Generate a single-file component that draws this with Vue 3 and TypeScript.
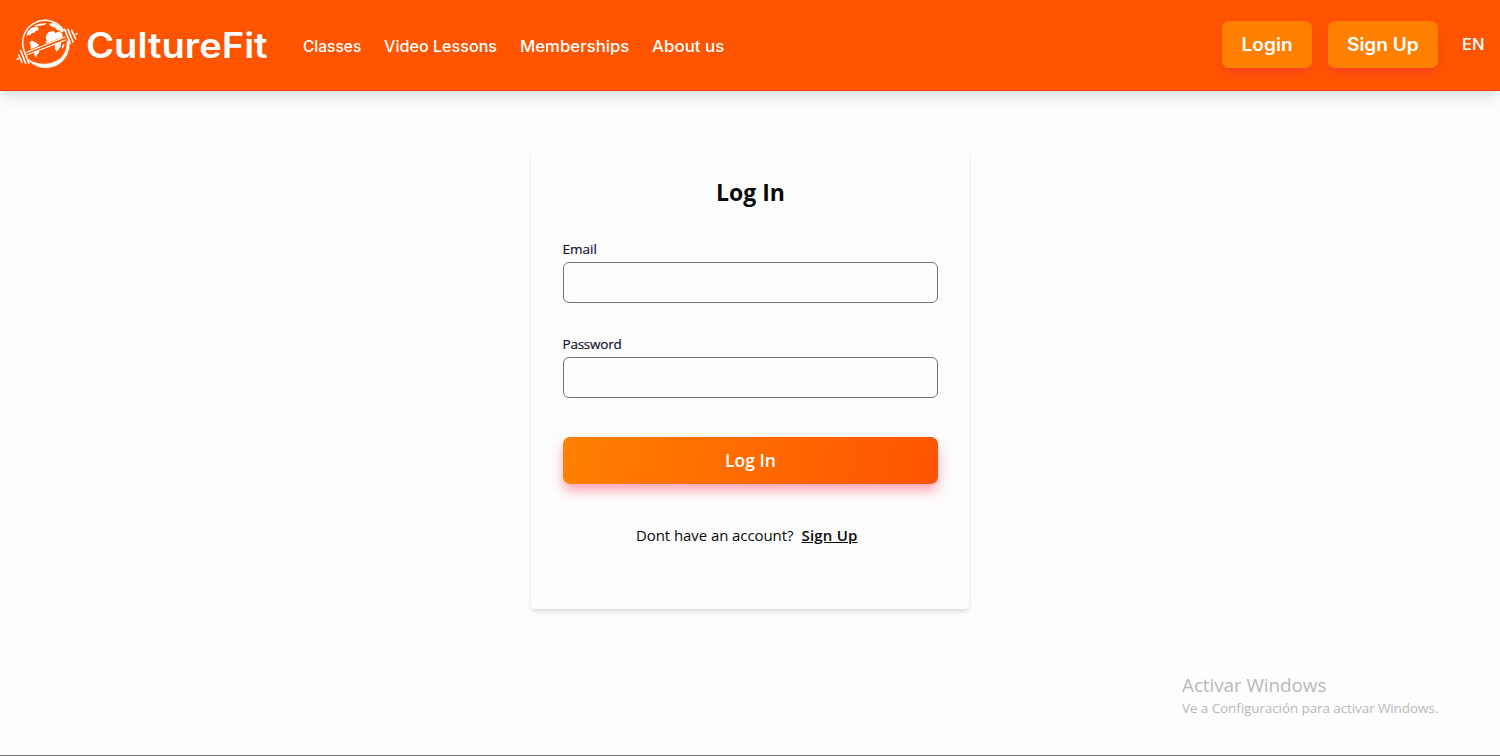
<script setup lang="ts">
import { ref } from 'vue'

interface NavLink {
  label: string
  kind: string
}

const links: NavLink[] = [
  { label: 'Classes', kind: 'classes' },
  { label: 'Video Lessons', kind: 'video' },
  { label: 'Memberships', kind: 'members' },
  { label: 'About us', kind: 'about' },
]

const email = ref('')
const password = ref('')
</script>

<template>
  <div class="page">
    <header class="topbar">
      <a class="brand">
        <svg class="logo" viewBox="45 57 192 150" fill="none" stroke="#fff">
          <path d="M72 151A67 67 0 0 1 192 93" stroke-width="4.5" />
          <path d="M207 122A70 70 0 0 1 84 178C108 196 149 198 176 179C194 166 202 147 201 125Z" fill="#fff" stroke-width="2" />
          <g fill="#fff" stroke="none">
            <path d="M78 109L84 94L94 84L106 80L117 83L113 88L118 90L108 92L103 98L96 99L89 106L82 105Z" />
            <path d="M103 76L120 71L139 69L134 75L119 77L108 80Z" />
            <path d="M147 71L159 69L174 76L185 86L190 96L183 97L179 91L171 90L166 84L153 79Z" />
            <path d="M139 105L146 96L161 93L166 99L178 94L187 101L188 112L137 131L140 121L137 114Z" />
            <path d="M88 127L96 122L107 127L117 134L112 140L91 148L93 138Z" />
            <path d="M102 156L118 149L117 158L111 164L109 173L103 166Z" />
            <path d="M164 134L184 126L182 139L175 150L169 155L165 145Z" />
            <path d="M189 132L194 135L189 145L185 145Z" />
          </g>
          <path d="M80 157L196 111M82 164L199 119" stroke-width="4" />
          <path d="M81 160.5L197 115" stroke="#ff5400" stroke-width="4" />
          <g stroke-width="4.8" stroke-linecap="round">
            <path d="M71 149L87 190M62 152L77 190M56 165L66 187" />
            <path d="M194 88L211 130M204 88L219 126M215 91L227 117" />
            <path d="M51 178L59 174M225 104L232 101" stroke-width="4" />
          </g>
        </svg>
        <span class="wordmark">CultureFit</span>
      </a>
      <nav class="nav">
        <a v-for="link in links" :key="link.kind" :class="['link', link.kind]">{{ link.label }}</a>
      </nav>
      <div class="actions">
        <button class="pill login" type="button"><span>Login</span></button>
        <button class="pill signup" type="button"><span>Sign Up</span></button>
        <span class="lang">EN</span>
      </div>
    </header>

    <main class="main">
      <form class="card" @submit.prevent>
        <h1 class="title">Log In</h1>
        <label class="field">
          <span class="caption">Email</span>
          <input v-model="email" class="input" type="email" />
        </label>
        <label class="field">
          <span class="caption pass">Password</span>
          <input v-model="password" class="input" type="password" />
        </label>
        <button class="submit" type="submit">Log In</button>
        <p class="prompt">
          <span class="question">Dont have an account?</span>
          <a class="register">Sign Up</a>
        </p>
      </form>
    </main>

    <aside class="notice">
      <div class="notice-title">Activar Windows</div>
      <div class="notice-text">Ve a Configuración para activar Windows.</div>
    </aside>
  </div>
</template>

<style>
body {
  margin: 0;
  overflow: hidden;
}
</style>

<style scoped>
.page {
  position: relative;
  box-sizing: border-box;
  height: 756px;
  background: #fdfdfd;
  border-bottom: 1px solid #777;
  font-family: 'Open Sans', 'Noto Sans', sans-serif;
  color: #0a0a0a;
  overflow: hidden;
}
.topbar {
  box-sizing: border-box;
  height: 91px;
  display: flex;
  align-items: center;
  padding: 0 15px;
  background: #ff5400;
  border-bottom: 1px solid #ef3a12;
  box-shadow: 0 10px 15px -3px rgba(0, 0, 0, 0.1), 0 4px 6px -2px rgba(0, 0, 0, 0.05);
  color: #fff;
  font-family: Inter, 'Open Sans', sans-serif;
  white-space: nowrap;
}
.brand {
  display: flex;
  align-items: center;
  width: 288px;
}
.logo {
  width: 64px;
  height: 50px;
  margin-top: -2px;
}
.wordmark {
  margin-left: 7px;
  font-size: 35px;
  font-weight: 600;
  line-height: 44px;
  transform: scaleX(1.09);
  transform-origin: left;
}
.nav {
  display: flex;
  padding-top: 3px;
  font-size: 15.5px;
  font-weight: 500;
  line-height: 24px;
}
.link { transform-origin: left; }
.classes { width: 81px; }
.video {
  width: 136px;
  transform: scaleX(1.04);
}
.members {
  width: 132px;
  transform: scaleX(1.08);
}
.about {
  width: 80px;
  transform: scaleX(1.09);
}
.actions {
  margin: -1px 0 0 auto;
  display: flex;
  align-items: center;
}
.pill {
  height: 47px;
  padding: 0;
  border: 0;
  border-radius: 7px;
  background: #ff8000;
  box-shadow: 0 5px 9px -1px rgba(244, 50, 70, 0.5);
  color: #fff;
  font: 600 18px/28px Inter, sans-serif;
}
.pill span {
  display: inline-block;
  transform: scaleX(1.06);
}
.login { width: 90px; }
.signup { margin-left: 16px; width: 110px; }
.lang {
  width: 23px;
  margin-left: 24px;
  font-size: 15.5px;
  font-weight: 500;
  transform: scaleX(1.07);
  transform-origin: left;
}
.main {
  display: flex;
  justify-content: center;
  padding-top: 57px;
}
.card {
  box-sizing: border-box;
  width: 438px;
  height: 461px;
  padding: 28px 31.5px 0;
  border-radius: 4px;
  background: #fdfdfd;
  box-shadow: 0 4px 6px -1px rgba(0, 0, 0, 0.1), 0 2px 4px -1px rgba(0, 0, 0, 0.06);
}
.title {
  margin: 0;
  padding-left: 1px;
  font-size: 23px;
  font-weight: 700;
  line-height: 32px;
  text-align: center;
}
.field {
  display: block;
  margin-top: 31px;
}
.caption {
  display: block;
  height: 23px;
  font-size: 13.5px;
  font-weight: 500;
  line-height: 20px;
  color: #111430;
  -webkit-text-stroke: 0.2px #111430;
}
.pass { letter-spacing: -0.23px; }
.input {
  display: block;
  box-sizing: border-box;
  width: 100%;
  height: 41px;
  padding: 0 12px;
  border: 1px solid #71717a;
  border-radius: 6px;
  background: #fefefe;
  font: 16px 'Open Sans', sans-serif;
  outline: none;
}
.submit {
  display: block;
  width: 100%;
  height: 47px;
  margin-top: 39px;
  padding: 0 0 2px 1px;
  border: 0;
  border-radius: 7px;
  background: linear-gradient(100deg, #ff8000, #ff5400);
  box-shadow: 0 7px 13px -1px rgba(255, 60, 90, 0.5);
  color: #fff;
  font: 600 17.5px/28px 'Open Sans', sans-serif;
}
.prompt {
  display: flex;
  margin: 39px 0 0 73.5px;
  font-size: 15px;
  line-height: 24px;
  white-space: nowrap;
}
.question {
  width: 165.5px;
  letter-spacing: -0.08px;
}
.register {
  font-weight: 600;
  letter-spacing: 0.2px;
  text-decoration: underline;
}
.notice {
  position: absolute;
  left: 1182px;
  top: 672px;
  color: #b9b9b9;
  white-space: nowrap;
}
.notice-title {
  font-size: 19px;
  line-height: 26px;
  letter-spacing: -0.13px;
}
.notice-text {
  font-size: 13.5px;
  line-height: 20px;
  letter-spacing: -0.1px;
}
</style>
